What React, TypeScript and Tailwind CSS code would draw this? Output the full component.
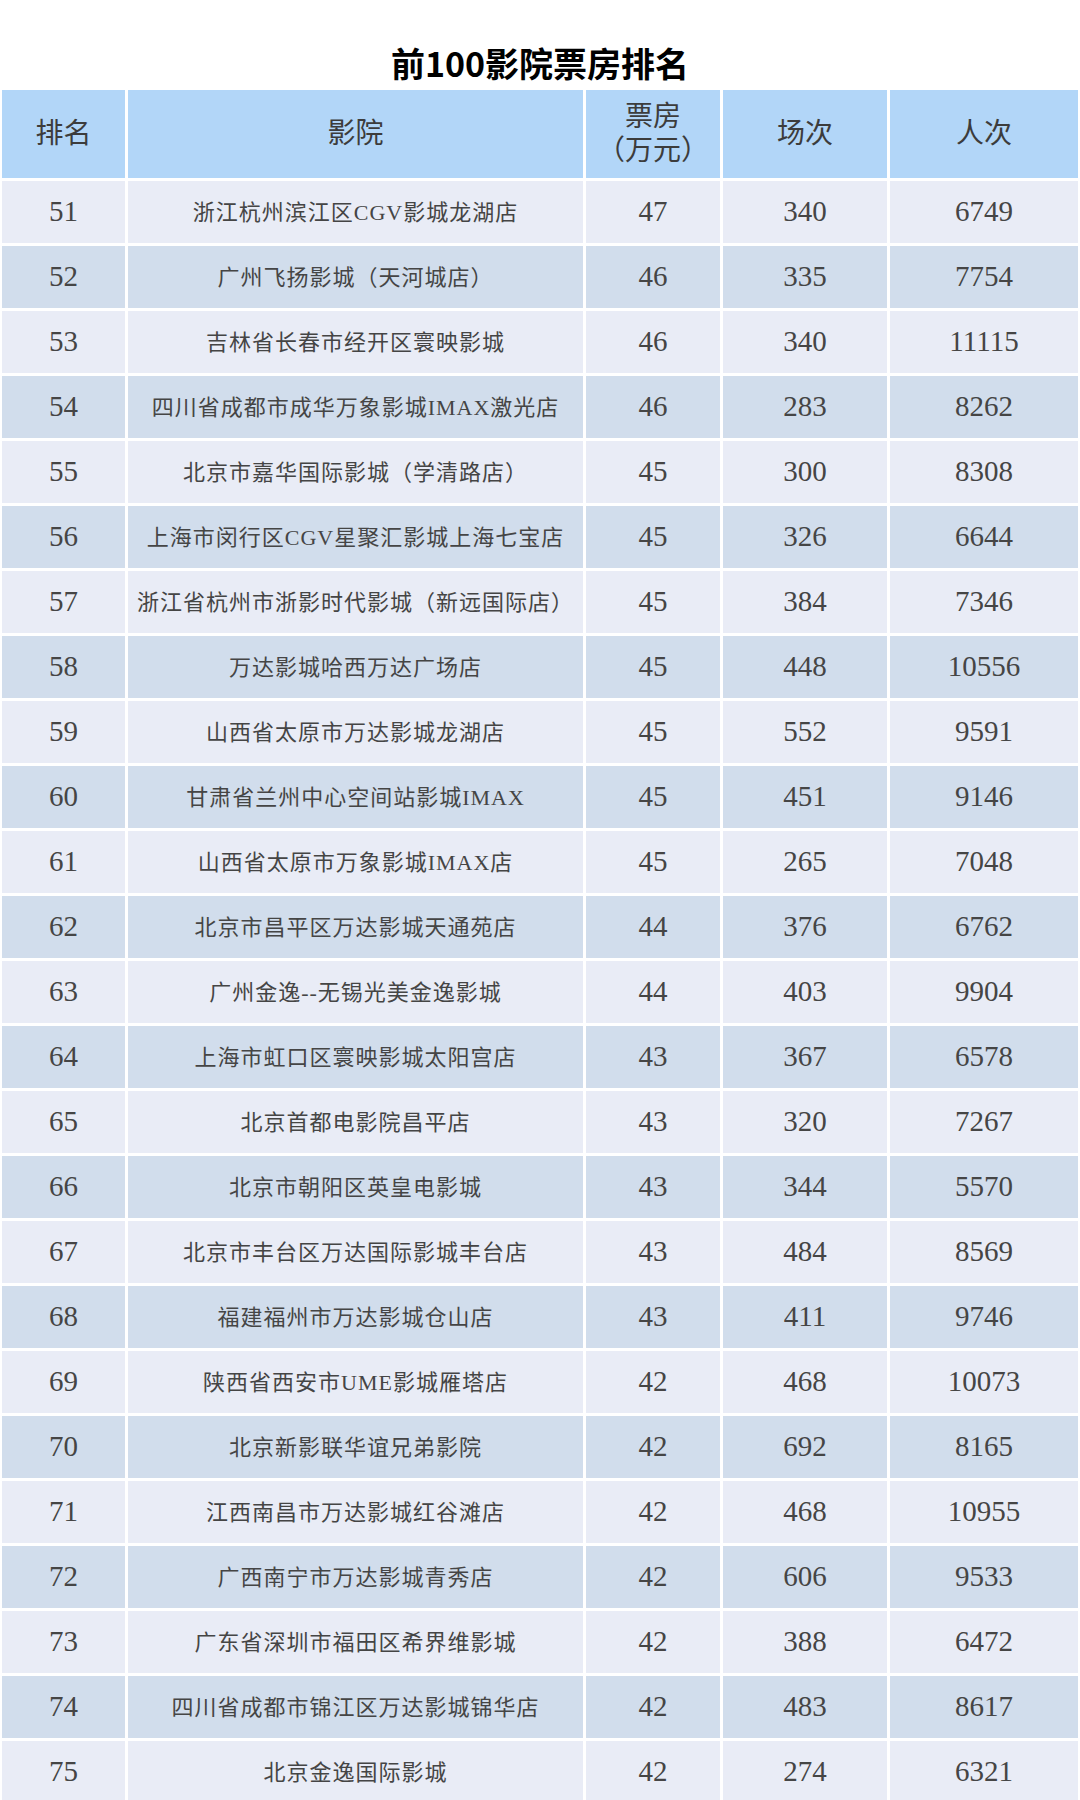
import React from 'react';

const rows: [number, string, number, number, number][] = [
  [51, '浙江杭州滨江区CGV影城龙湖店', 47, 340, 6749],
  [52, '广州飞扬影城（天河城店）', 46, 335, 7754],
  [53, '吉林省长春市经开区寰映影城', 46, 340, 11115],
  [54, '四川省成都市成华万象影城IMAX激光店', 46, 283, 8262],
  [55, '北京市嘉华国际影城（学清路店）', 45, 300, 8308],
  [56, '上海市闵行区CGV星聚汇影城上海七宝店', 45, 326, 6644],
  [57, '浙江省杭州市浙影时代影城（新远国际店）', 45, 384, 7346],
  [58, '万达影城哈西万达广场店', 45, 448, 10556],
  [59, '山西省太原市万达影城龙湖店', 45, 552, 9591],
  [60, '甘肃省兰州中心空间站影城IMAX', 45, 451, 9146],
  [61, '山西省太原市万象影城IMAX店', 45, 265, 7048],
  [62, '北京市昌平区万达影城天通苑店', 44, 376, 6762],
  [63, '广州金逸--无锡光美金逸影城', 44, 403, 9904],
  [64, '上海市虹口区寰映影城太阳宫店', 43, 367, 6578],
  [65, '北京首都电影院昌平店', 43, 320, 7267],
  [66, '北京市朝阳区英皇电影城', 43, 344, 5570],
  [67, '北京市丰台区万达国际影城丰台店', 43, 484, 8569],
  [68, '福建福州市万达影城仓山店', 43, 411, 9746],
  [69, '陕西省西安市UME影城雁塔店', 42, 468, 10073],
  [70, '北京新影联华谊兄弟影院', 42, 692, 8165],
  [71, '江西南昌市万达影城红谷滩店', 42, 468, 10955],
  [72, '广西南宁市万达影城青秀店', 42, 606, 9533],
  [73, '广东省深圳市福田区希界维影城', 42, 388, 6472],
  [74, '四川省成都市锦江区万达影城锦华店', 42, 483, 8617],
  [75, '北京金逸国际影城', 42, 274, 6321],
];

const grid = 'grid grid-cols-[123px_455px_134px_164px_188px] gap-[3px]';
const serif = "font-['Liberation_Serif','Noto_Sans_CJK_SC',serif]";

function App() {
  return (
    <div className="w-[1080px] h-[1800px] bg-white overflow-hidden">
      <div className="h-[90px] flex items-end justify-center pb-[5px]">
        <h1 className="text-[34px] leading-[44px] font-bold text-black font-['Noto_Sans_CJK_SC',sans-serif]">
          前100影院票房排名
        </h1>
      </div>

      <div className={`${grid} pl-[2px] text-[#3c3c3c]`}>
        <div className={`h-[88px] bg-[#b2d6f8] flex items-center justify-center text-[28px] ${serif}`}>排名</div>
        <div className={`h-[88px] bg-[#b2d6f8] flex items-center justify-center text-[28px] ${serif}`}>影院</div>
        <div className={`h-[88px] bg-[#b2d6f8] flex flex-col items-center justify-center text-[28px] leading-[34px] ${serif}`}>
          <span>票房</span>
          <span>（万元）</span>
        </div>
        <div className={`h-[88px] bg-[#b2d6f8] flex items-center justify-center text-[28px] ${serif}`}>场次</div>
        <div className={`h-[88px] bg-[#b2d6f8] flex items-center justify-center text-[28px] ${serif}`}>人次</div>
      </div>

      <div className="flex flex-col gap-[3px] mt-[3px] text-[#454545]">
        {rows.map(([rank, name, box, shows, people], i) => {
          const bg = i % 2 === 0 ? 'bg-[#e9ecf6]' : 'bg-[#d1ddec]';
          return (
            <div key={rank} className={`${grid} pl-[2px]`}>
              <div className={`h-[62px] ${bg} flex items-center justify-center text-[29px] ${serif}`}>{rank}</div>
              <div className={`h-[62px] ${bg} flex items-center justify-center text-[22px] tracking-[1px] whitespace-nowrap ${serif}`}>{name}</div>
              <div className={`h-[62px] ${bg} flex items-center justify-center text-[29px] ${serif}`}>{box}</div>
              <div className={`h-[62px] ${bg} flex items-center justify-center text-[29px] ${serif}`}>{shows}</div>
              <div className={`h-[62px] ${bg} flex items-center justify-center text-[29px] ${serif}`}>{people}</div>
            </div>
          );
        })}
      </div>
    </div>
  );
}

export default App;
